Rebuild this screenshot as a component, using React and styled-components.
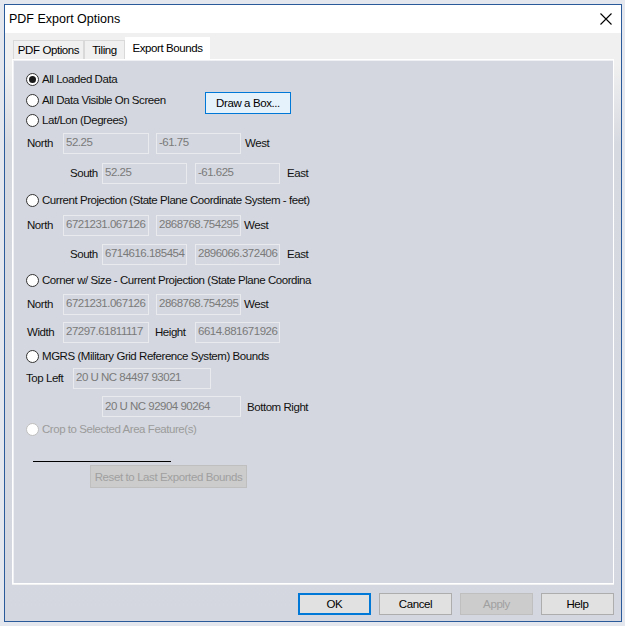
import React from "react";
import styled, { createGlobalStyle } from "styled-components";

const Global = createGlobalStyle`
  html, body { margin: 0; padding: 0; }
  body {
    width: 625px; height: 626px; overflow: hidden;
    background: #e4e8ee;
    font-family: "Liberation Sans", Arial, sans-serif;
  }
`;

const Window = styled.div`
  box-sizing: border-box;
  margin: 4px 0 0 4px;
  width: 618px;
  height: 618px;
  border: 1px solid #2a5a9a;
  display: flex;
  flex-direction: column;
  background: linear-gradient(#f0f0f0 0px, #f0f0f0 60px, #d6d9e0 140px, #d4d7df 100%);
`;

const TitleBar = styled.div`
  height: 28px;
  background: #fff;
  display: flex;
  align-items: center;
  justify-content: space-between;
  padding: 0 9px 0 4px;
  font-size: 12.5px;
  color: #000;
`;

const CloseIcon = styled.svg`
  width: 12px;
  height: 12px;
`;

const Body = styled.div`
  flex: 1;
  display: flex;
  flex-direction: column;
  padding: 0 7px;
`;

const TabStrip = styled.div`
  height: 26px;
  display: flex;
  align-items: flex-end;
  padding-left: 1px;
`;

const Tab = styled.div`
  box-sizing: border-box;
  height: ${(p) => (p.$active ? "23px" : "19px")};
  width: ${(p) => p.$w}px;
  display: flex;
  align-items: center;
  justify-content: center;
  font-size: 11.5px;
  letter-spacing: -0.4px;
  color: #000;
  background: ${(p) => (p.$active ? "#fff" : "#f0f0f0")};
  border: 1px solid ${(p) => (p.$active ? "#fff" : "#d9d9d9")};
  border-bottom: none;
  margin-bottom: ${(p) => (p.$active ? "-1px" : "0")};
  padding-bottom: ${(p) => (p.$active ? "2px" : "0")};
`;

const Panel = styled.div`
  box-sizing: border-box;
  height: 525px;
  border: 1px solid #fff;
  box-shadow: inset 1px 1px 0 #eef0f4, 0 1px 0 #f2f2f2;
  background: #d4d7df;
  padding-top: 9px;
  display: flex;
  flex-direction: column;
  font-size: 11.5px;
  letter-spacing: -0.45px;
  color: #111;
`;

const Row = styled.div`
  height: ${(p) => p.$h}px;
  display: flex;
  align-items: center;
  flex-shrink: 0;
`;

const ActionRow = styled.div`
  height: ${(p) => p.$h}px;
  display: grid;
  grid-template-columns: 179px 86px;
  grid-template-rows: ${(p) => p.$h}px;
  align-items: center;
  padding-left: 13px;
  flex-shrink: 0;
`;

const RadioLabel = styled.label`
  display: flex;
  align-items: center;
  gap: 3px;
  margin-left: ${(p) => p.$ml ?? 0}px;
  color: ${(p) => (p.$disabled ? "#9b9b9b" : "inherit")};
  white-space: nowrap;
`;

const Circle = styled.span`
  box-sizing: border-box;
  width: 13px;
  height: 13px;
  border-radius: 50%;
  border: 1px solid ${(p) => (p.$disabled ? "#bfbfbf" : "#333")};
  background: #fff;
  display: flex;
  align-items: center;
  justify-content: center;
  flex-shrink: 0;
  &::after {
    content: "";
    display: ${(p) => (p.$checked ? "block" : "none")};
    width: 7px;
    height: 7px;
    border-radius: 50%;
    background: #1a1a1a;
  }
`;

const FieldLabel = styled.span`
  margin-left: ${(p) => p.$ml ?? 0}px;
  width: ${(p) => (p.$w ? `${p.$w}px` : "auto")};
  flex-shrink: 0;
  white-space: nowrap;
`;

const Field = styled.input`
  box-sizing: border-box;
  margin: 0 0 0 ${(p) => p.$ml ?? 0}px;
  width: ${(p) => p.$w}px;
  height: 21px;
  border: 1px solid #e9eaed;
  background: #d4d7df;
  color: #7a7a7a;
  font-family: "Liberation Sans", Arial, sans-serif;
  font-size: 11.5px;
  letter-spacing: -0.5px;
  padding: 0 0 2px 2px;
  outline: none;
  flex-shrink: 0;
`;

const Button = styled.button`
  box-sizing: border-box;
  width: ${(p) => p.$w}px;
  height: ${(p) => p.$h ?? 22}px;
  margin-left: ${(p) => p.$ml ?? 0}px;
  font-family: "Liberation Sans", Arial, sans-serif;
  font-size: 11.5px;
  letter-spacing: -0.4px;
  padding: 0;
  color: ${(p) => (p.$disabled ? "#a0a0a0" : "#000")};
  background: ${(p) =>
    p.$disabled ? "#cccccc" : p.$hot ? "#e5f1fb" : "#e1e1e1"};
  border: 1px solid
    ${(p) => (p.$disabled ? "#bfbfbf" : p.$hot || p.$default ? "#0078d7" : "#adadad")};
  box-shadow: ${(p) => (p.$default ? "inset 0 0 0 1px #0078d7" : "none")};
  flex-shrink: 0;
`;

const DrawButton = styled(Button)`
  align-self: start;
  margin-top: 3px;
`;

const Rule = styled.div`
  margin: 25px 0 0 20px;
  width: 138px;
  height: 1px;
  background: #000;
  flex-shrink: 0;
`;

const ResetWrap = styled.div`
  margin-top: 3px;
  display: flex;
`;

const Footer = styled.div`
  flex: 1;
  display: flex;
  justify-content: flex-end;
  align-items: flex-start;
  padding-top: 9px;
  gap: 8px;
`;

function Radio({ checked, disabled, children, ml = 13 }) {
  return (
    <RadioLabel $ml={ml} $disabled={disabled}>
      <Circle $checked={checked} $disabled={disabled} />
      {children}
    </RadioLabel>
  );
}

function NorthRow({ a, b, h, westGap = 4 }) {
  return (
    <Row $h={h}>
      <FieldLabel $ml={14} $w={36}>North</FieldLabel>
      <Field $w={86} value={a} readOnly />
      <Field $ml={7} $w={85} value={b} readOnly />
      <FieldLabel $ml={westGap}>West</FieldLabel>
    </Row>
  );
}

function SouthRow({ a, b, h }) {
  return (
    <Row $h={h}>
      <FieldLabel $ml={57} $w={32}>South</FieldLabel>
      <Field $w={85} value={a} readOnly />
      <Field $ml={8} $w={85} value={b} readOnly />
      <FieldLabel $ml={7}>East</FieldLabel>
    </Row>
  );
}

export default function App() {
  return (
    <>
      <Global />
      <Window>
        <TitleBar>
          <span>PDF Export Options</span>
          <CloseIcon viewBox="0 0 12 12">
            <path d="M0.5 0.5 L11.5 11.5 M11.5 0.5 L0.5 11.5" stroke="#000" strokeWidth="1.1" />
          </CloseIcon>
        </TitleBar>
        <Body>
          <TabStrip>
            <Tab $w={71}>PDF Options</Tab>
            <Tab $w={41}>Tiling</Tab>
            <Tab $w={85} $active>Export Bounds</Tab>
          </TabStrip>
          <Panel>
            <Row $h={20}>
              <Radio checked>All Loaded Data</Radio>
            </Row>
            <ActionRow $h={22}>
              <Radio ml={0}>All Data Visible On Screen</Radio>
              <DrawButton $w={86} $h={22} $hot>Draw a Box...</DrawButton>
            </ActionRow>
            <Row $h={18}>
              <Radio>Lat/Lon (Degrees)</Radio>
            </Row>
            <NorthRow h={28} a="52.25" b="-61.75" />
            <SouthRow h={32} a="52.25" b="-61.625" />
            <Row $h={22}>
              <Radio>Current Projection (State Plane Coordinate System - feet)</Radio>
            </Row>
            <NorthRow h={28} a="6721231.067126" b="2868768.754295" westGap={3} />
            <SouthRow h={30} a="6714616.185454" b="2896066.372406" />
            <Row $h={22}>
              <Radio>Corner w/ Size - Current Projection (State Plane Coordina</Radio>
            </Row>
            <NorthRow h={26} a="6721231.067126" b="2868768.754295" westGap={3} />
            <Row $h={30}>
              <FieldLabel $ml={14} $w={36}>Width</FieldLabel>
              <Field $w={86} value="27297.61811117" readOnly />
              <FieldLabel $ml={6} $w={40}>Height</FieldLabel>
              <Field $w={85} value="6614.881671926" readOnly />
            </Row>
            <Row $h={18}>
              <Radio>MGRS (Military Grid Reference System) Bounds</Radio>
            </Row>
            <Row $h={26}>
              <FieldLabel $ml={13} $w={47}>Top Left</FieldLabel>
              <Field $w={138} value="20 U NC 84497 93021" readOnly />
            </Row>
            <Row $h={31}>
              <Field $ml={89} $w={139} value="20 U NC 92904 90264" readOnly />
              <FieldLabel $ml={6}>Bottom Right</FieldLabel>
            </Row>
            <Row $h={14}>
              <Radio disabled>Crop to Selected Area Feature(s)</Radio>
            </Row>
            <Rule />
            <ResetWrap>
              <Button $ml={77} $w={157} $h={23} $disabled disabled>
                Reset to Last Exported Bounds
              </Button>
            </ResetWrap>
          </Panel>
          <Footer>
            <Button $w={73} $default>OK</Button>
            <Button $w={73}>Cancel</Button>
            <Button $w={73} $disabled disabled>Apply</Button>
            <Button $w={73}>Help</Button>
          </Footer>
        </Body>
      </Window>
    </>
  );
}
